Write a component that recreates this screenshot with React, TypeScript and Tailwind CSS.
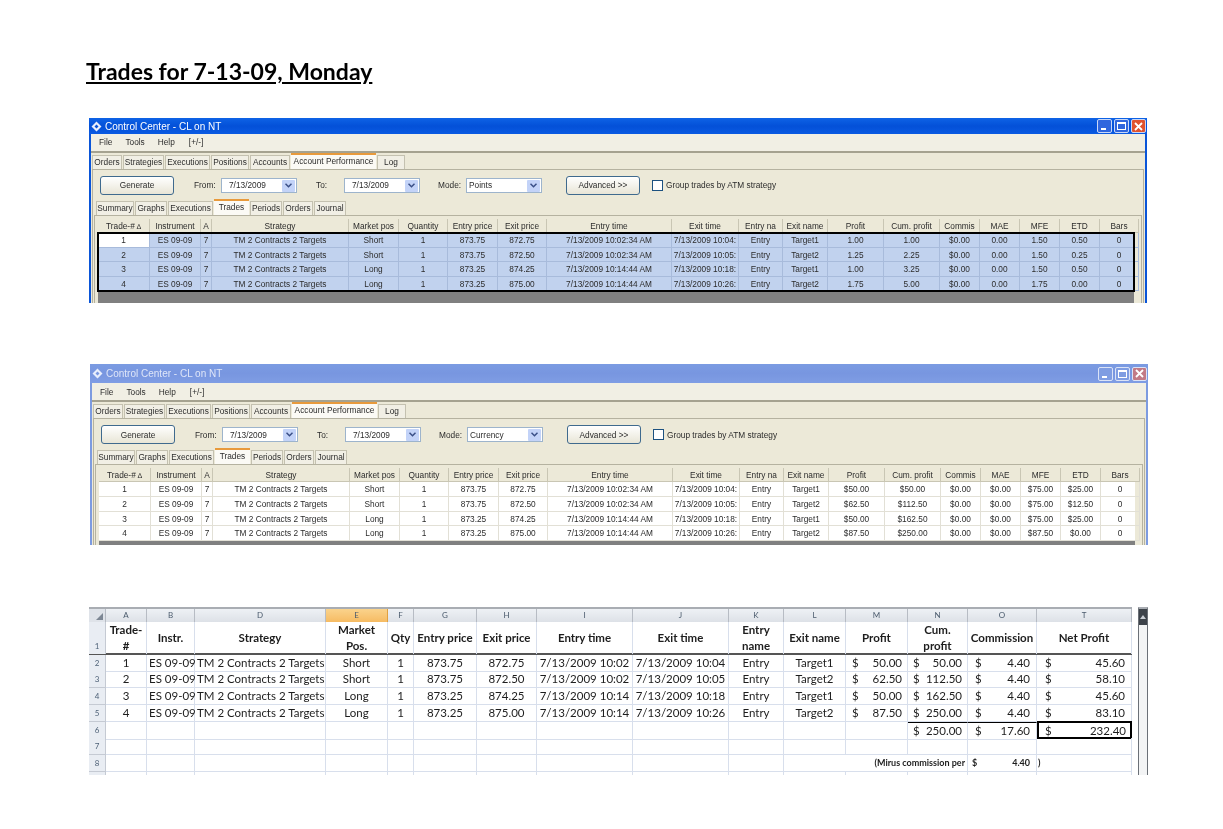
import { ReactNode } from "react";

const TOP_TABS: [string, string][] = [
  ["Orders", "w-[30px]"],
  ["Strategies", "w-[41px]"],
  ["Executions", "w-[45px]"],
  ["Positions", "w-[38px]"],
  ["Accounts", "w-[40px]"],
  ["Account Performance", "w-[85px]"],
  ["Log", "w-[28px]"],
];

const SUB_TABS: [string, string][] = [
  ["Summary", "w-[38px]"],
  ["Graphs", "w-[32px]"],
  ["Executions", "w-[45px]"],
  ["Trades", "w-[35px]"],
  ["Periods", "w-[32px]"],
  ["Orders", "w-[30px]"],
  ["Journal", "w-[32px]"],
];

const HEADERS = ["Trade-#", "Instrument", "A", "Strategy", "Market pos", "Quantity", "Entry price", "Exit price", "Entry time", "Exit time", "Entry na", "Exit name", "Profit", "Cum. profit", "Commis", "MAE", "MFE", "ETD", "Bars"];

const BASE = [
  ["1", "Short", "873.75", "872.75", "7/13/2009 10:02:34 AM", "7/13/2009 10:04:", "Target1"],
  ["2", "Short", "873.75", "872.50", "7/13/2009 10:02:34 AM", "7/13/2009 10:05:", "Target2"],
  ["3", "Long", "873.25", "874.25", "7/13/2009 10:14:44 AM", "7/13/2009 10:18:", "Target1"],
  ["4", "Long", "873.25", "875.00", "7/13/2009 10:14:44 AM", "7/13/2009 10:26:", "Target2"],
];

const POINTS = [
  ["1.00", "1.00", "$0.00", "0.00", "1.50", "0.50", "0"],
  ["1.25", "2.25", "$0.00", "0.00", "1.50", "0.25", "0"],
  ["1.00", "3.25", "$0.00", "0.00", "1.50", "0.50", "0"],
  ["1.75", "5.00", "$0.00", "0.00", "1.75", "0.00", "0"],
];

const CURRENCY = [
  ["$50.00", "$50.00", "$0.00", "$0.00", "$75.00", "$25.00", "0"],
  ["$62.50", "$112.50", "$0.00", "$0.00", "$75.00", "$12.50", "0"],
  ["$50.00", "$162.50", "$0.00", "$0.00", "$75.00", "$25.00", "0"],
  ["$87.50", "$250.00", "$0.00", "$0.00", "$87.50", "$0.00", "0"],
];

function rowsFor(stats: string[][]) {
  return BASE.map((b, i) => [b[0], "ES 09-09", "7", "TM 2 Contracts 2 Targets", b[1], "1", b[2], b[3], b[4], b[5], "Entry", b[6], ...stats[i]]);
}

const NT_COLS = "grid grid-cols-[52px_51px_11px_137px_50px_49px_50px_49px_125px_67px_44px_45px_56px_56px_40px_40px_40px_40px_39px]";

function Combo({ value, w, left }: { value: string; w: string; left?: boolean }) {
  return (
    <div className={`${w} h-[15px] bg-white border border-[#9db4cc] flex items-center`}>
      <span className={`flex-1 ${left ? "pl-[2px]" : "pl-[7px]"}`}>{value}</span>
      <span className="w-[13px] h-[12px] mr-[1px] bg-[#c3d3f8] rounded-[1px] flex items-center justify-center">
        <svg width="7" height="5" viewBox="0 0 7 5"><path d="M0.5 0.8 L3.5 3.8 L6.5 0.8" fill="none" stroke="#3a4f87" strokeWidth="1.5" /></svg>
      </span>
    </div>
  );
}

function XpButton({ label, w }: { label: string; w: string }) {
  return (
    <div className={`${w} h-[19px] rounded-[3px] border border-[#3f6a8e] bg-gradient-to-b from-white to-[#e8e5d6] flex items-center justify-center`}>
      {label}
    </div>
  );
}

function Tabs({ tabs, active }: { tabs: [string, string][]; active: string }) {
  return (
    <div className="flex items-end gap-[1px]">
      {tabs.map(([name, w]) =>
        name === active ? (
          <div key={name} className={`${w} h-[16px] bg-[#fbfaf5] border-t-2 border-[#e89a3c] text-center leading-[12px]`}>{name}</div>
        ) : (
          <div key={name} className={`${w} h-[14px] bg-[#f1efe5] border border-b-0 border-[#c4c1b0] text-center leading-[13px]`}>{name}</div>
        )
      )}
    </div>
  );
}

function WinButtons({ active }: { active: boolean }) {
  const blue = active ? "bg-[#2f66de]" : "bg-[#7f9de2]";
  const edge = active ? "border-[#c9d8f8]" : "border-[#dbe3f7]";
  const red = active ? "bg-[#e0532f]" : "bg-[#c27a86]";
  return (
    <div className="flex gap-[2px] mr-[1px]">
      <div className={`w-[15px] h-[14px] rounded-[2px] border ${edge} ${blue} flex items-end pl-[3px] pb-[2px]`}>
        <div className="w-[5px] h-[2px] bg-white" />
      </div>
      <div className={`w-[15px] h-[14px] rounded-[2px] border ${edge} ${blue} flex items-center justify-center`}>
        <div className="w-[9px] h-[8px] border border-t-2 border-white" />
      </div>
      <div className={`w-[15px] h-[14px] rounded-[2px] border ${edge} ${red} flex items-center justify-center`}>
        <svg width="9" height="9" viewBox="0 0 9 9"><path d="M1 1 L8 8 M8 1 L1 8" stroke="#fff" strokeWidth="1.8" /></svg>
      </div>
    </div>
  );
}

function NtWindow({ active, mode, rows, shift, titleH, grayH }: { active: boolean; mode: string; rows: string[][]; shift: string; titleH: string; grayH: string }) {
  const cellLine = active ? "border-r border-b border-[#a8bbdb]" : "border-r border-b border-[#e2e0d6]";
  return (
    <div className={`${shift} w-[1058px] font-['Liberation_Sans',sans-serif] text-[8.3px] text-[#2c2c2c] bg-[#ece9d8] border-x-2 ${active ? "border-[#0a55d8]" : "border-[#7d9be0]"}`}>
      <div className={`${titleH} -mx-[2px] flex items-center justify-between text-white ${active ? "bg-gradient-to-b from-[#0f63e6] via-[#0450d8] to-[#0a5ae2]" : "bg-gradient-to-b from-[#7b9be2] via-[#7896e0] to-[#7f9de4]"}`}>
        <div className="flex items-center gap-[3px] pl-[2px]">
          <svg width="11" height="11" viewBox="0 0 11 11"><path d="M5.5 0.5 L10.5 5.5 L5.5 10.5 L0.5 5.5 Z M5.5 3.5 L3.5 5.5 L5.5 7.5 L7.5 5.5 Z" fill="#e8eefc" fillRule="evenodd" /></svg>
          <span className={`text-[10px] ${active ? "" : "text-[#dfe6f8]"}`}>Control Center - CL on NT</span>
        </div>
        <WinButtons active={active} />
      </div>
      <div className="h-[19px] bg-[#f1efe4] border-b-2 border-[#a5a290] flex items-center gap-[13px] pl-[8px]">
        <span>File</span><span>Tools</span><span>Help</span><span className="ml-[1px]">[+/-]</span>
      </div>
      <div className="pl-[1px]">
        <Tabs tabs={TOP_TABS} active="Account Performance" />
      </div>
      <div className="mx-[1px] border-t border-x border-[#b5b2a0]">
        <div className="h-[29px] pt-[6px]">
          <div className="h-[19px] flex items-center">
            <div className="ml-[7px]"><XpButton label="Generate" w="w-[74px]" /></div>
            <span className="ml-[20px] w-[27px]">From:</span>
            <Combo value="7/13/2009" w="w-[76px]" />
            <span className="ml-[19px] w-[28px]">To:</span>
            <Combo value="7/13/2009" w="w-[76px]" />
            <span className="ml-[18px] w-[28px]">Mode:</span>
            <Combo value={mode} w="w-[76px]" left />
            <div className="ml-[24px]"><XpButton label="Advanced >>" w="w-[74px]" /></div>
            <div className="ml-[12px] w-[11px] h-[11px] bg-white border border-[#1c5180]" />
            <span className="ml-[3px]">Group trades by ATM strategy</span>
          </div>
        </div>
        <div className="pl-[3px]">
          <Tabs tabs={SUB_TABS} active="Trades" />
        </div>
        <div className="mx-[1px] pl-[3px] pt-[3px] pr-[7px] border-t border-x border-[#b5b2a0]">
          <div className={`${NT_COLS} h-[14px] bg-[#ece9d8]`}>
            {HEADERS.map((h) => (
              <div key={h} className="border-r border-b border-[#c9c6b4] text-center leading-[14px] overflow-hidden whitespace-nowrap">
                {h}{h === "Trade-#" && <span className="text-[7px]"> ∆</span>}
              </div>
            ))}
          </div>
          <div className="relative">
            {rows.map((r, i) => (
              <div key={i} className={`${NT_COLS} h-[14.6px] ${active ? "bg-[#c1d2ee]" : "bg-white"}`}>
                {r.map((c, j) => (
                  <div key={j} className={`${cellLine} ${active && i === 0 && j === 0 ? "bg-white" : ""} text-center leading-[14px] overflow-hidden whitespace-nowrap`}>{c}</div>
                ))}
              </div>
            ))}
            {active && <div className="absolute -inset-[1px] border-2 border-black pointer-events-none" />}
          </div>
          <div className={`${grayH} bg-[#808080]`} />
        </div>
      </div>
    </div>
  );
}

const XL_COLS = "grid grid-cols-[17px_41px_48px_131px_62px_26px_63px_60px_96px_96px_55px_62px_62px_60px_69px_95px]";
const LINE = "border-r border-b border-[#d8dfec]";

function Money({ v, pad }: { v: string; pad: string }) {
  return (
    <div className={`${LINE} flex justify-between ${pad}`}>
      <span>$</span><span>{v}</span>
    </div>
  );
}

function Cell({ children, left }: { children?: ReactNode; left?: boolean }) {
  return <div className={`${LINE} whitespace-nowrap ${left ? "pl-[2px]" : "text-center"}`}>{children}</div>;
}

function RowNum({ n }: { n: number }) {
  return <div className="bg-[#e9edf3] border-r border-b border-[#c5cad3] text-[8px] font-normal text-[#4f6278] text-center leading-[16px]">{n}</div>;
}

const XL_DATA = [
  ["1", "Short", "873.75", "872.75", "7/13/2009 10:02", "7/13/2009 10:04", "Target1", "50.00", "50.00", "4.40", "45.60"],
  ["2", "Short", "873.75", "872.50", "7/13/2009 10:02", "7/13/2009 10:05", "Target2", "62.50", "112.50", "4.40", "58.10"],
  ["3", "Long", "873.25", "874.25", "7/13/2009 10:14", "7/13/2009 10:18", "Target1", "50.00", "162.50", "4.40", "45.60"],
  ["4", "Long", "873.25", "875.00", "7/13/2009 10:14", "7/13/2009 10:26", "Target2", "87.50", "250.00", "4.40", "83.10"],
];

const XL_LETTERS = ["A", "B", "D", "E", "F", "G", "H", "I", "J", "K", "L", "M", "N", "O", "T"];

const XL_HEADS = ["Trade-\n#", "Instr.", "Strategy", "Market\nPos.", "Qty", "Entry price", "Exit price", "Entry time", "Exit time", "Entry\nname", "Exit name", "Profit", "Cum.\nprofit", "Commission", "Net Profit"];

function Sheet() {
  return (
    <div className="ml-[89px] w-[1059px] flex font-['Lato',sans-serif] text-[11.5px] text-[#1d1d1d]">
      <div className="w-[1043px]">
        <div className={`${XL_COLS} h-[15px] border-t-2 border-[#a9adb3] text-[8px] text-[#4a5a6c] leading-[13px]`}>
          <div className="bg-[#dfe3e9] border-r border-[#b7bcc4] flex items-end justify-end p-[2px]">
            <div className="w-0 h-0 border-l-[7px] border-l-transparent border-b-[7px] border-b-[#7d8794]" />
          </div>
          {XL_LETTERS.map((l) => (
            <div key={l} className={`text-center border-r ${l === "E" ? "bg-gradient-to-b from-[#fad38c] to-[#f6bb62] border-[#e0a040]" : "bg-gradient-to-b from-[#eef1f5] to-[#dde1e7] border-[#b7bcc4]"}`}>{l}</div>
          ))}
        </div>
        <div className={`${XL_COLS} h-[33px] border-b-2 border-[#555] font-bold leading-[16px]`}>
          <div className="bg-[#e9edf3] border-r border-[#c5cad3] text-[8px] font-normal text-[#4f6278] text-center flex items-end justify-center">1</div>
          {XL_HEADS.map((h) => (
            <div key={h} className="border-r border-[#d8dfec] flex items-center justify-center text-center whitespace-pre">{h}</div>
          ))}
        </div>
        {XL_DATA.map((d, i) => (
          <div key={d[0]} className={`${XL_COLS} h-[16.7px] leading-[16px]`}>
            <RowNum n={i + 2} />
            <Cell>{d[0]}</Cell>
            <Cell left>ES 09-09</Cell>
            <Cell left>TM 2 Contracts 2 Targets</Cell>
            <Cell>{d[1]}</Cell>
            <Cell>1</Cell>
            <Cell>{d[2]}</Cell>
            <Cell>{d[3]}</Cell>
            <Cell>{d[4]}</Cell>
            <Cell>{d[5]}</Cell>
            <Cell>Entry</Cell>
            <Cell>{d[6]}</Cell>
            <Money v={d[7]} pad="pl-[6px] pr-[5px]" />
            <Money v={d[8]} pad="pl-[5px] pr-[5px]" />
            <Money v={d[9]} pad="pl-[7px] pr-[6px]" />
            <Money v={d[10]} pad="pl-[8px] pr-[6px]" />
          </div>
        ))}
        <div className={`${XL_COLS} h-[16.7px] leading-[16px]`}>
          <RowNum n={6} />
          {Array.from({ length: 12 }, (_, i) => <Cell key={i} />)}
          <div className={`${LINE} border-t border-t-black flex justify-between pl-[5px] pr-[5px]`}><span>$</span><span>250.00</span></div>
          <div className={`${LINE} border-t border-t-black flex justify-between pl-[7px] pr-[6px]`}><span>$</span><span>17.60</span></div>
          <div className="border-2 border-black flex justify-between pl-[6px] pr-[4px] -mt-[1px] h-[18px]"><span>$</span><span>232.40</span></div>
        </div>
        <div className={`${XL_COLS} h-[16.7px]`}>
          <RowNum n={7} />
          {Array.from({ length: 15 }, (_, i) => <Cell key={i} />)}
        </div>
        <div className={`${XL_COLS} h-[16.7px] text-[9px] font-bold leading-[16px]`}>
          <RowNum n={8} />
          {Array.from({ length: 10 }, (_, i) => <Cell key={i} />)}
          <div className="col-span-3 border-r border-b border-[#d8dfec] text-right pr-[2px]">(Mirus commission per</div>
          <div className={`${LINE} flex justify-between pl-[4px] pr-[6px]`}><span>$</span><span>4.40</span></div>
          <div className={`${LINE} pl-[1px]`}>)</div>
        </div>
        <div className={`${XL_COLS} h-[3px]`}>
          <div className="bg-[#e9edf3] border-r border-[#c5cad3]" />
          {Array.from({ length: 15 }, (_, i) => <div key={i} className="border-r border-[#d8dfec]" />)}
        </div>
      </div>
      <div className="ml-[6px] w-[10px] border-x border-[#6b7077] bg-[#f3f4f5] border-t-2 border-t-[#a9adb3]">
        <div className="h-[16px] bg-[#3d434a] flex items-center justify-center">
          <div className="w-0 h-0 border-x-[3px] border-x-transparent border-b-[4px] border-b-[#c9ced4]" />
        </div>
      </div>
    </div>
  );
}

export default function App() {
  return (
    <div className="w-[1223px] h-[829px] bg-white overflow-hidden blur-[0.35px]">
      <h1 className="ml-[86px] pt-[57px] h-[118px] font-['Lato',sans-serif] font-bold text-[23px] leading-[28px] text-black underline underline-offset-2">
        Trades for 7-13-09, Monday
      </h1>
      <NtWindow active mode="Points" rows={rowsFor(POINTS)} shift="ml-[89px]" titleH="h-[16px]" grayH="h-[12px]" />
      <div className="h-[61px]" />
      <NtWindow active={false} mode="Currency" rows={rowsFor(CURRENCY)} shift="ml-[90px]" titleH="h-[19px]" grayH="h-[4px]" />
      <div className="h-[62px]" />
      <Sheet />
    </div>
  );
}
